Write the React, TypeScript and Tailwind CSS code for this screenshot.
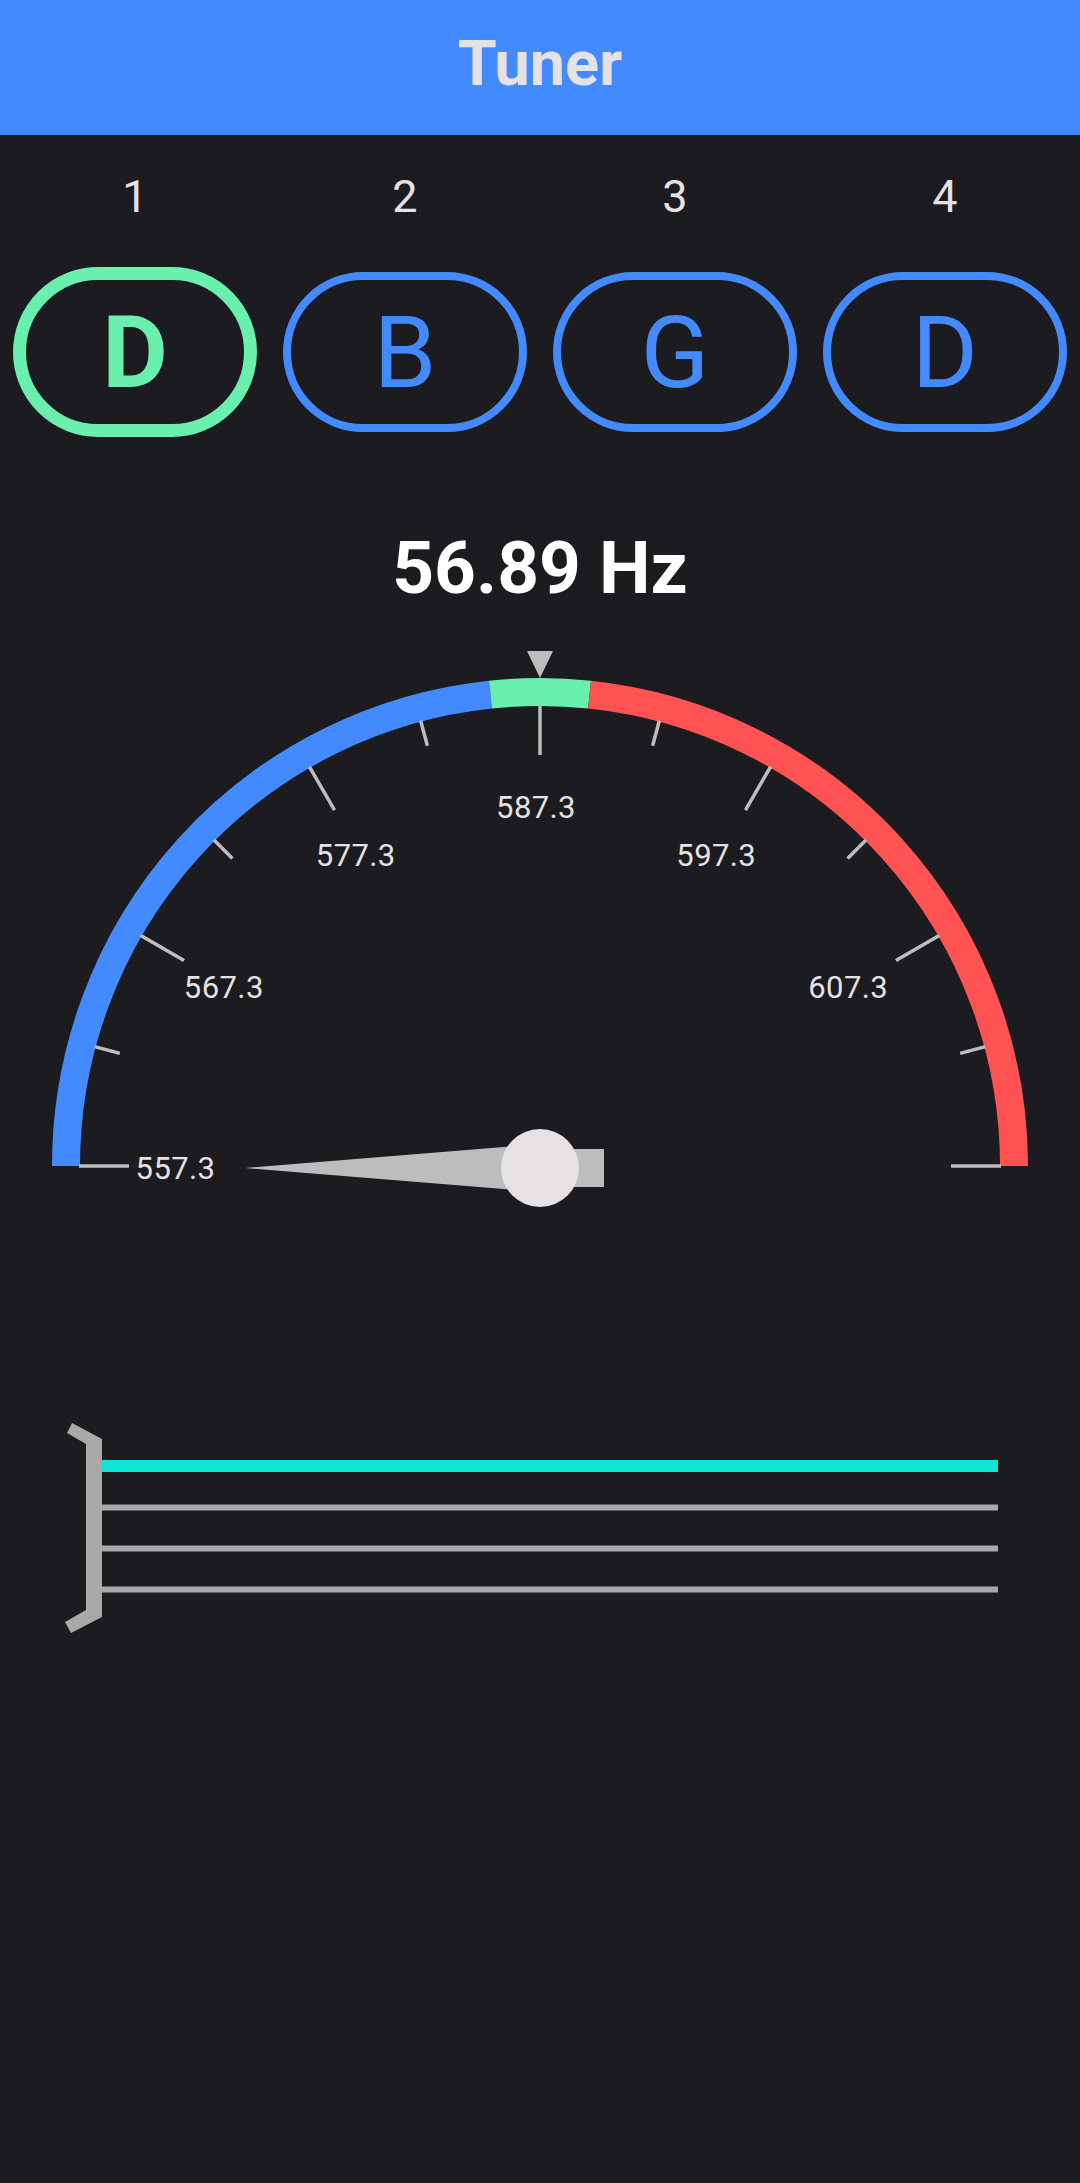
import React from "react";

const CX = 540;
const CY = 1166;
const ARC_R = 474;
const TICK_IN = 461;

interface TuningString {
	index: number;
	note: string;
	active?: boolean;
}

const strings: TuningString[] = [
	{ index: 1, note: "D", active: true },
	{ index: 2, note: "B" },
	{ index: 3, note: "G" },
	{ index: 4, note: "D" },
];

const labels = ["557.3", "567.3", "577.3", "587.3", "597.3", "607.3"];

// angle in degrees, 0 = left end of the dial, 180 = right end
const polar = (r: number, deg: number) => {
	const a = (deg * Math.PI) / 180;
	return { x: CX - r * Math.cos(a), y: CY - r * Math.sin(a) };
};

const arcPath = (from: number, to: number) => {
	const a = polar(ARC_R, from);
	const b = polar(ARC_R, to);
	return `M ${a.x} ${a.y} A ${ARC_R} ${ARC_R} 0 0 1 ${b.x} ${b.y}`;
};

const StringButton = ({ note, active }: TuningString) => (
	<div className="flex items-center justify-center">
		{active ? (
			<div className="flex h-[170px] w-[244px] items-center justify-center rounded-full border-[13px] border-[#69f0ae] text-[101px] font-bold leading-none text-[#69f0ae]">
				{note}
			</div>
		) : (
			<div className="flex h-[160px] w-[244px] items-center justify-center rounded-full border-[8px] border-[#448aff] text-[101px] font-normal leading-none text-[#448aff]">
				{note}
			</div>
		)}
	</div>
);

const Gauge = () => {
	const ticks = [];
	for (let i = 0; i <= 12; i++) {
		const deg = i * 15;
		const major = i % 2 === 0;
		const p1 = polar(TICK_IN, deg);
		const p2 = polar(major ? TICK_IN - 50 : TICK_IN - 26, deg);
		ticks.push(
			<line
				key={i}
				x1={p1.x}
				y1={p1.y}
				x2={p2.x}
				y2={p2.y}
				stroke="#bdbdbd"
				strokeWidth={3.5}
			/>,
		);
	}

	return (
		<svg width="1080" height="620" viewBox="0 620 1080 620" className="block">
			<path d={arcPath(0, 84)} fill="none" stroke="#448aff" strokeWidth={28} />
			<path d={arcPath(84, 96)} fill="none" stroke="#69f0ae" strokeWidth={28} />
			<path d={arcPath(96, 180)} fill="none" stroke="#ff5252" strokeWidth={28} />
			{ticks}
			<polygon points="527,651 553,651 540,678" fill="#bdbdbd" />
			{labels.map((label, i) => {
				const p = polar(360.5, i * 30);
				return (
					<text
						key={label}
						x={p.x - 4}
						y={p.y + 12.5}
						textAnchor="middle"
						fontSize="31"
						letterSpacing="0.4"
						fill="#e6e1e5"
						fontFamily="Roboto, 'Noto Sans', sans-serif"
					>
						{label}
					</text>
				);
			})}
			<polygon
				points="245,1168 540,1144 540,1149 604,1149 604,1187 540,1187 540,1192"
				fill="#bdbdbd"
			/>
			<circle cx="540" cy="1168" r="39" fill="#e6e1e5" />
		</svg>
	);
};

const Fretboard = () => (
	<svg width="1080" height="420" viewBox="0 1240 1080 420" className="block">
		<polygon
			points="72,1423 102,1439 102,1617 71,1633 65,1622 86,1610 86,1444 67,1433"
			fill="#a9a9a9"
		/>
		<rect x="101" y="1460" width="897" height="12" fill="#0ee5d6" />
		<rect x="101" y="1504.5" width="897" height="6" fill="#a9a9a9" />
		<rect x="101" y="1545.5" width="897" height="6" fill="#a9a9a9" />
		<rect x="101" y="1586.5" width="897" height="6" fill="#a9a9a9" />
	</svg>
);

export default function App() {
	return (
		<div className="min-h-screen w-[1080px] bg-[#1c1b1f] font-['Roboto',_'Noto_Sans',_sans-serif]">
			<header className="flex h-[135px] items-center justify-center bg-[#448aff] pb-2">
				<h1 className="text-[63px] font-bold leading-none text-[#e6e1e5]">Tuner</h1>
			</header>

			<div className="mt-[39px] grid h-[45px] grid-cols-4 text-[45px] leading-none text-[#e6e1e5]">
				{strings.map((s) => (
					<div key={s.index} className="text-center">
						{s.index}
					</div>
				))}
			</div>

			<div className="mt-[48px] grid h-[170px] grid-cols-4">
				{strings.map((s) => (
					<StringButton key={s.index} {...s} />
				))}
			</div>

			<div className="mt-[95px] h-[73px] text-center text-[73px] font-bold leading-none text-white">
				56.89 Hz
			</div>

			<div className="mt-[15px]">
				<Gauge />
			</div>

			<Fretboard />
		</div>
	);
}
